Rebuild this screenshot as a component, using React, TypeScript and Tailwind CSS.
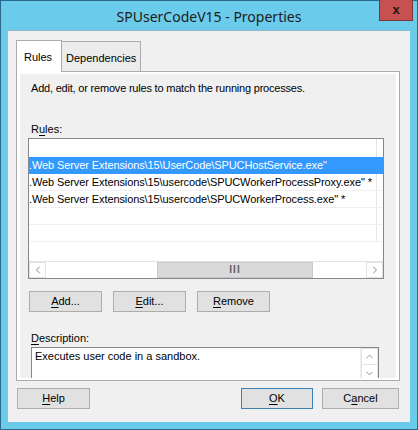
import { ChevronLeft, ChevronRight, ChevronUp, ChevronDown } from "lucide-react";

const ctl = { fontFamily: '"Liberation Sans", Arial, sans-serif' };

function Btn({
  label,
  u,
  w = "w-[73px]",
  primary = false,
}: {
  label: string;
  u: number;
  w?: string;
  primary?: boolean;
}) {
  return (
    <button
      className={`${w} h-[21px] shrink-0 flex items-center justify-center text-[11px] text-black bg-[#e1e1e1] border ${
        primary ? "border-[#3c7fb1]" : "border-[#adadad]"
      }`}
    >
      <span>
        {label.slice(0, u)}
        <span className="underline underline-offset-2">{label[u]}</span>
        {label.slice(u + 1)}
      </span>
    </button>
  );
}

const rows = [
  '.Web Server Extensions\\15\\UserCode\\SPUCHostService.exe"',
  '.Web Server Extensions\\15\\usercode\\SPUCWorkerProcessProxy.exe" *',
  '.Web Server Extensions\\15\\usercode\\SPUCWorkerProcess.exe" *',
  "",
  "",
];

export default function App() {
  return (
    <div
      className="w-[418px] h-[430px] bg-[#6bcbea] border border-[#2a6a88] flex flex-col"
      style={ctl}
    >
      {/* Title bar */}
      <div className="relative h-[29px] shrink-0 flex items-center justify-center">
        <span
          className="text-[14px] text-[#1b1b1b] pt-[1px]"
          style={{ fontFamily: '"Noto Sans", "Open Sans", sans-serif' }}
        >
          SPUserCodeV15 - Properties
        </span>
        <div className="absolute right-[4px] top-[-1px] w-[34px] h-[21px] bg-[#c75050] border border-[#7a3a3a] border-t-0 flex items-center justify-center">
          <span className="text-[13px] font-bold text-[#1a1a1a] leading-none mt-[-2px]">x</span>
        </div>
      </div>

      {/* Client area */}
      <div className="mx-[7px] h-[392px] shrink-0 bg-[#f0f0f0] border-t border-[#8fb6c9] flex flex-col pt-[8px] px-[8px]">
        {/* Tabs */}
        <div className="flex items-end h-[32px] shrink-0">
          <div className="w-[46px] h-[32px] bg-white border border-b-0 border-[#acacac] text-[11px] pl-[7px] pt-[8px] relative z-10 mb-[-1px]">
            Rules
          </div>
          <div className="w-[79px] h-[30px] bg-[#ececec] border border-l-0 border-b-0 border-[#acacac] text-[11px] pl-[4px] pt-[8px]">
            Dependencies
          </div>
        </div>

        {/* Panel */}
        <div className="w-[384px] h-[310px] shrink-0 bg-white border border-[#acacac] px-[3px] pt-[2px] pb-[2px]">
          <div className="h-full bg-[#f0f0f0] overflow-hidden flex flex-col text-[11px] text-black">
            <div className="shrink-0 pl-[11px] pt-[7px] leading-[14px] tracking-[-0.2px]">
              Add, edit, or remove rules to match the running processes.
            </div>
            <div className="shrink-0 pl-[11px] mt-[27px] leading-[14px]">
              R<span className="underline underline-offset-2">u</span>les:
            </div>

            {/* List view */}
            <div className="shrink-0 ml-[8px] mt-[2px] w-[356px] h-[141px] border border-[#828790] bg-white flex flex-col">
              <div className="flex-1 flex flex-col overflow-hidden">
                <div className="h-[18px] shrink-0 flex">
                  <div className="w-[348px] border-r border-[#e5e5e5]" />
                </div>
                {rows.map((r, i) => (
                  <div
                    key={i}
                    className={`h-[17px] shrink-0 flex border-b ${
                      i === 0 ? "bg-[#3399ff] text-white border-[#3399ff]" : "border-[#f0f0f0]"
                    }`}
                  >
                    <div
                      className={`w-[348px] whitespace-nowrap overflow-hidden leading-[16px] tracking-[-0.1px] ${
                        i === 0 ? "" : "border-r border-[#e5e5e5]"
                      }`}
                    >
                      {r}
                    </div>
                  </div>
                ))}
              </div>
              {/* Horizontal scrollbar */}
              <div className="h-[17px] shrink-0 flex bg-white border-t border-[#e3e3e3]">
                <div className="w-[17px] h-full border border-[#e3e3e3] flex items-center justify-center text-[#606060]">
                  <ChevronLeft size={12} strokeWidth={1.5} />
                </div>
                <div className="w-[111px]" />
                <div className="w-[156px] h-full bg-[#dadada] border border-[#c8c8c8] flex items-center justify-center">
                  <span className="text-[10px] text-[#606060] leading-none font-bold tracking-[1px]">III</span>
                </div>
                <div className="flex-1" />
                <div className="w-[17px] h-full border border-[#e3e3e3] flex items-center justify-center text-[#606060]">
                  <ChevronRight size={12} strokeWidth={1.5} />
                </div>
              </div>
            </div>

            {/* Rule buttons */}
            <div className="shrink-0 flex gap-[11px] ml-[9px] mt-[12px]">
              <Btn label="Add..." u={0} />
              <Btn label="Edit..." u={0} />
              <Btn label="Remove" u={0} />
            </div>

            <div className="shrink-0 pl-[11px] mt-[19px] leading-[14px]">
              <span className="underline underline-offset-2">D</span>escription:
            </div>

            {/* Description box */}
            <div className="shrink-0 ml-[11px] mt-[2px] w-[348px] h-[40px] border border-[#828790] bg-white flex">
              <div className="flex-1 pl-[3px] pt-[1px] leading-[14px]">Executes user code in a sandbox.</div>
              <div className="w-[18px] flex flex-col border-l border-[#f0f0f0]">
                <div className="h-[17px] border border-[#e3e3e3] flex items-center justify-center text-[#606060]">
                  <ChevronUp size={11} strokeWidth={1.5} />
                </div>
                <div className="h-[17px] border border-t-0 border-[#e3e3e3] flex items-center justify-center text-[#606060]">
                  <ChevronDown size={11} strokeWidth={1.5} />
                </div>
              </div>
            </div>
          </div>
        </div>

        {/* Bottom buttons */}
        <div className="shrink-0 flex mt-[7px] ml-[1px]">
          <Btn label="Help" u={0} />
          <div className="flex-1" />
          <Btn label="OK" u={0} primary w="w-[72px]" />
          <div className="w-[9px]" />
          <Btn label="Cancel" u={1} w="w-[77px]" />
          <div className="w-[3px]" />
        </div>
      </div>
    </div>
  );
}
